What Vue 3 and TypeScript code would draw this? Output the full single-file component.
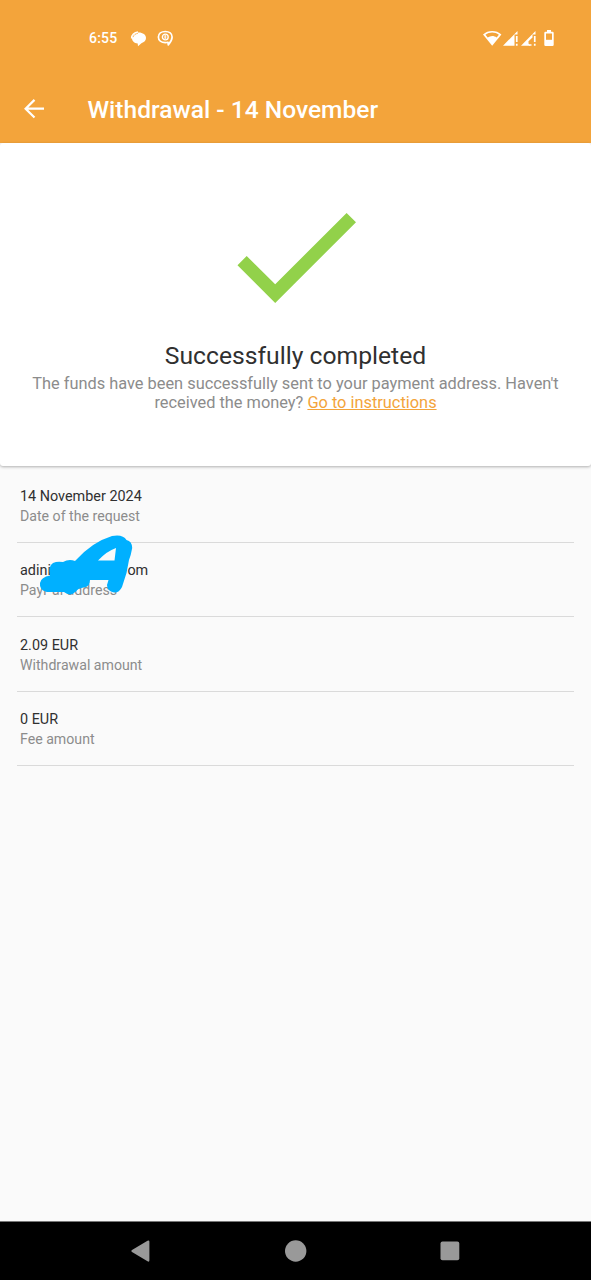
<script setup lang="ts">
interface Detail {
  value: string
  tail?: string
  label: string
}

const details: Detail[] = [
  { value: '14 November 2024', label: 'Date of the request' },
  { value: 'adini', tail: 'om', label: 'PayPal address' },
  { value: '2.09 EUR', label: 'Withdrawal amount' },
  { value: '0 EUR', label: 'Fee amount' },
]
</script>

<template>
  <div class="screen">
    <header class="top">
      <div class="status">
        <span class="clock">6:55</span>
        <svg class="chat" width="17" height="16" viewBox="0 0 17 16">
          <path d="M8.7 1.6c4.2 0 7.3 2.3 7.3 5.5 0 2.4-1.8 4.400-4.600 5.100L8 15.200l-.3-2.800C4.200 12.100 2 10 2 7.200 2 4 4.700 1.600 8.700 1.600z" fill="#fff" />
          <path d="M1.500 7.500C1.300 3.800 4.300 1.300 8 1" fill="none" stroke="#fff" stroke-width="1.300" />
          <path d="M3.100 6.200C3.700 3.800 5.700 2.700 8 2.300" fill="none" stroke="#f3a43b" stroke-width=".7" />
        </svg>
        <svg class="bubble" width="17" height="17" viewBox="0 0 17 17">
          <path d="M8.300 1.500c4 0 6.800 2.200 6.800 5.600 0 3.200-1.500 5.300-3.800 7.700l-.3-2.500c-.8.300-1.700.4-2.700.4-4 0-6.900-2.200-6.900-5.600s2.900-5.600 6.900-5.600z" fill="none" stroke="#fff" stroke-width="1.700" stroke-linejoin="round" />
          <circle cx="8.300" cy="7" r="2.900" fill="none" stroke="#fff" stroke-width="1.400" />
          <path d="M7 6.100h2.500M7 7.900h2.500M8.300 5v4" stroke="#fff" stroke-width=".8" />
        </svg>
        <svg class="signals" width="74" height="20" viewBox="0 0 74 20">
          <path d="M9.200 17.800 0 6.400C5.100 1.900 13.200 1.900 18.400 6.400z" fill="#fff" />
          <path d="M2.500 6.700c3.900-2.900 9.500-2.900 13.400 0l-2.200 2.900C10.900 7.600 7.500 7.600 4.700 9.600z" fill="#f3a43b" />
          <path d="M20 17.700 34.500 3v3.500H31.500v11.200z" fill="#fff" />
          <path d="M32.900 8h1.700v6h-1.700zM32.900 15.800h1.700v1.900h-1.700z" fill="#fff" />
          <path d="M38 17.700 52.500 3v3.500H49.500v3l-4 3.700v2.200l1.800 2.300z" fill="#fff" />
          <path d="M46 17.700h2.500v-1.500H46zM50.900 8h1.700v6h-1.700zM50.900 15.800h1.700v1.900h-1.700z" fill="#fff" />
          <path d="M64 2h4v1.700h1.500q1.200 0 1.200 1.200v11.800q0 1.200-1.200 1.200h-7q-1.200 0-1.200-1.200V4.900q0-1.200 1.200-1.200H64z" fill="#fff" />
          <path d="M63 5.500h6v6.300h-6z" fill="#f3a43b" />
        </svg>
      </div>
      <div class="bar">
        <svg class="back" width="22" height="22" viewBox="0 0 22 22">
          <path d="M21 10.700H2.800M11.500 1.900 2.600 10.700l8.900 8.800" fill="none" stroke="#fff" stroke-width="2.200" />
        </svg>
        <h1>Withdrawal - 14 November</h1>
      </div>
    </header>
    <section class="card">
      <svg class="check" width="120" height="92" viewBox="0 0 120 92">
        <path d="M.5 53.300 9.700 44 38.200 72.200 109.600 1 119 10.300 38.200 90.900z" fill="#92d14a" />
      </svg>
      <h2>Successfully completed</h2>
      <p>The funds have been successfully sent to your payment address. Haven't<br />received the money? <a>Go to instructions</a></p>
    </section>
    <main class="details">
      <div v-for="item in details" :key="item.label" class="row">
        <div class="value">
          <span>{{ item.value }}</span><span v-if="item.tail" class="tail">{{ item.tail }}</span>
        </div>
        <div class="label">{{ item.label }}</div>
        <svg v-if="item.tail" class="scribble" width="96" height="64" viewBox="0 0 96 64">
          <path
            fill="#00b0ff"
            fill-rule="evenodd"
            d="M37 27Q54 8 74 2Q85 0 88.500 6Q94 7 94.200 14Q93 21 91 26L88.500 39L84 53Q81 59 76 58.500Q69 57 69 51L70.500 46H52Q52 53 46 53.500Q40 54 38 57.500Q32 63 26 58H9Q1 56 2 49Q3 43 12 41.500Q10 32 15 29Q19 27 25 28Q31 24.500 37 27zM60 26.500H76.500L78 14Q69 17 60 26.500z"
          />
        </svg>
      </div>
    </main>
    <nav class="nav">
      <svg width="22" height="24" viewBox="0 0 22 24"><path d="M2 11.100 17.500 1.800q1.900-1 1.900 1v18.500q0 2-1.900 1L2 13q-1.600-.9 0-1.900z" fill="#999" /></svg>
      <svg width="22" height="24" viewBox="0 0 22 24"><circle cx="10.700" cy="12" r="10.700" fill="#999" /></svg>
      <svg width="22" height="24" viewBox="0 0 22 24"><rect x="1.500" y="2.500" width="18.800" height="18.800" rx="2" fill="#999" /></svg>
    </nav>
  </div>
</template>

<style>
body {
  margin: 0;
}
</style>

<style scoped>
.screen {
  display: flex;
  flex-direction: column;
  width: 591px;
  height: 1280px;
  overflow: hidden;
  background: #fafafa;
  font-family: Roboto, "Liberation Sans", sans-serif;
  color: #303030;
}
.top {
  height: 143px;
  background: #f3a43b;
  color: #fff;
}
.status {
  display: flex;
  align-items: center;
  height: 76px;
  padding-left: 89px;
}
.clock {
  width: 41px;
  font-size: 14px;
  font-weight: 500;
  letter-spacing: 0.2px;
}
.chat,
.bubble {
  margin-top: 1px;
}
.bubble {
  margin-left: 10px;
}
.signals {
  margin-left: 309px;
}
.bar {
  display: flex;
  align-items: center;
  height: 66px;
  padding-left: 23px;
}
h1 {
  margin: 2px 0 0 42.5px;
  font-size: 24.550px;
  font-weight: 500;
  line-height: 30px;
  white-space: nowrap;
}
.card {
  display: flex;
  flex-direction: column;
  align-items: center;
  height: 323px;
  box-sizing: border-box;
  padding-top: 69px;
  border-radius: 3px;
  background: #fff;
  box-shadow: 0 1px 3px rgba(0, 0, 0, 0.3);
}
.check {
  flex: none;
  margin-left: 3px;
}
h2 {
  margin: 36px 0 0;
  font-size: 24.7px;
  font-weight: 400;
  line-height: 32px;
}
p {
  margin: 2px 0 0;
  font-size: 16.380px;
  line-height: 19px;
  text-align: center;
  white-space: nowrap;
  color: #8c8c8c;
}
a {
  color: #f3a43b;
  text-decoration: underline;
}
.details {
  flex: 1;
  padding: 2.300px 17px 0;
}
.row {
  position: relative;
  height: 74.5px;
  box-sizing: border-box;
  padding: 18.500px 0 0 3px;
  border-bottom: 1.500px solid #dadada;
}
.value,
.label {
  font-size: 14.4px;
  line-height: 20px;
}
.value {
  display: flex;
}
.tail {
  margin-left: 76.500px;
}
.label {
  font-size: 14.15px;
  line-height: 18.400px;
  color: #8c8c8c;
}
.scribble {
  position: absolute;
  left: 21px;
  top: -8.500px;
}
.nav {
  display: flex;
  align-items: center;
  justify-content: space-between;
  height: 59px;
  box-sizing: border-box;
  padding: 0 130px 1px;
  border-top: 1px solid #777;
  background: #000;
}
</style>
